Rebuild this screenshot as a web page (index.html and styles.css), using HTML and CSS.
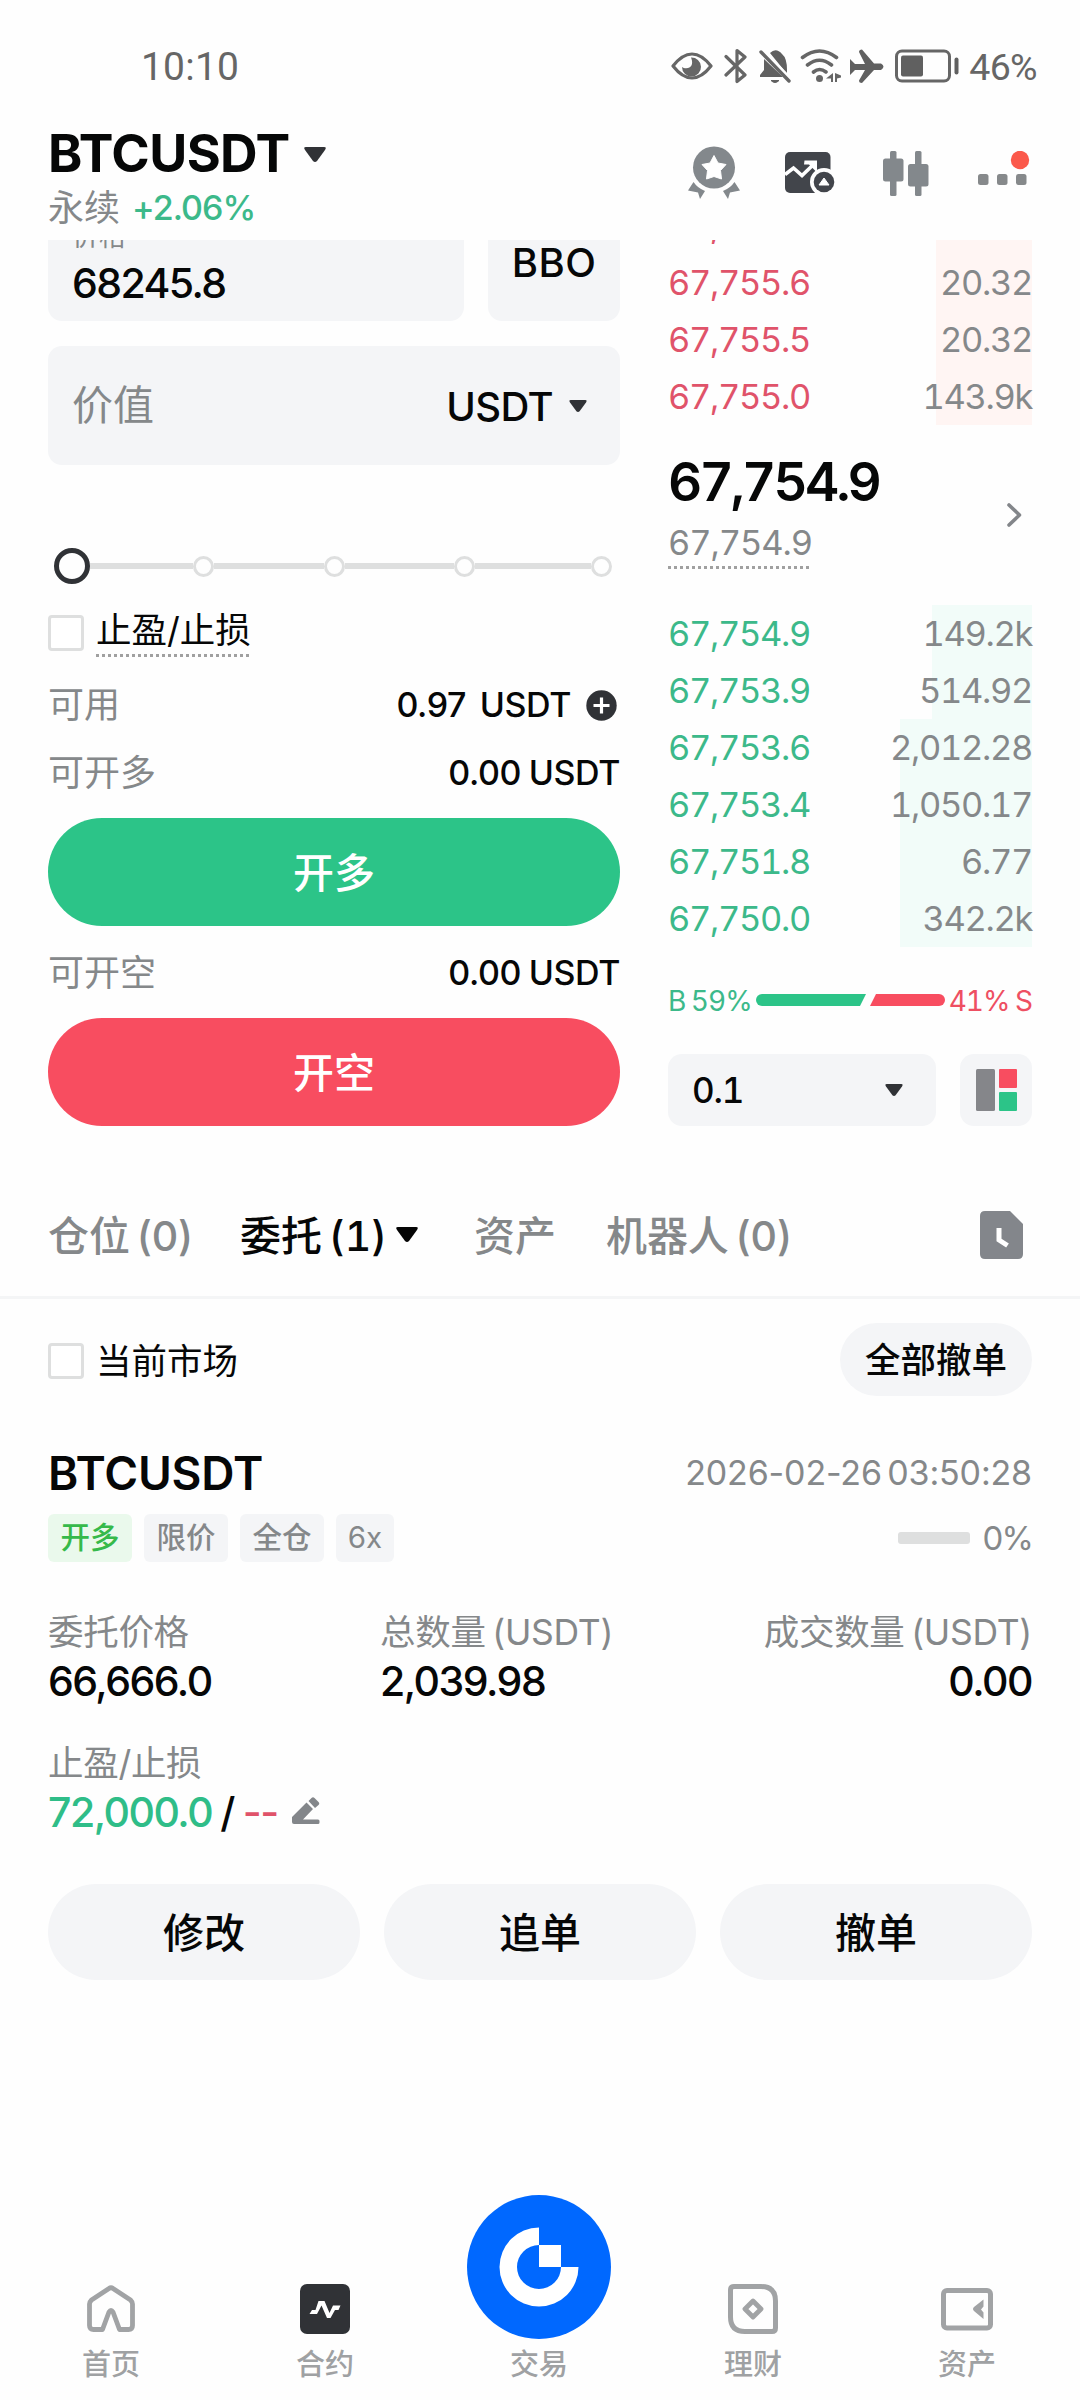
FILE: index.html
```html
<!DOCTYPE html>
<html lang="zh-CN">
<head>
<meta charset="utf-8">
<title>BTCUSDT 永续</title>
<link rel="stylesheet" href="styles.css">
</head>
<body>
<div class="screen">
  <div class="status">
    <span class="clock">10:10</span>
    <div class="status-icons">
      <svg class="i-eye" width="42" height="36" viewBox="0 0 42 36"><path d="M2 18C9 9 15 6 21 6s12 3 19 12c-7 9-13 12-19 12S9 27 2 18z" fill="none" stroke="#666" stroke-width="3.2" stroke-linejoin="round"/><path d="M20 9.500a9.500 9.500 0 1 1-9 9.500c2.500 2 9 2 10-3 .5-3-.5-5-1-6.500z" fill="#666"/></svg>
      <svg class="i-bt" width="24" height="36" viewBox="0 0 24 36"><path d="M2 8.500 21 27 13 33.500V2.500l8 6.500L2 27" fill="none" stroke="#666" stroke-width="3.200" stroke-linejoin="round" stroke-linecap="round"/></svg>
      <svg class="i-bell" width="32" height="36" viewBox="0 0 32 36"><path d="M11 5q6-6 12 1 5 4 5 16v4z" fill="#606060"/><path d="M5 11v11l-4 5v2h23z" fill="#606060"/><path d="M12 32.500h8q-4 4-8 0z" fill="#606060" stroke="#606060"/><path d="M4 2 31 30" stroke="#fefefe" stroke-width="3"/><path d="m2 4 28 29" stroke="#666" stroke-width="3.400" stroke-linecap="round"/></svg>
      <svg class="i-wifi" width="42" height="36" viewBox="0 0 42 36"><g fill="none" stroke="#666" stroke-width="3.600" stroke-linecap="round"><path d="M2.500 9.500q17-13 34 0M7.500 17q12-9.500 24 0M13.500 24q6-5 12.500 0"/></g><circle cx="19.500" cy="30.500" r="3.500" fill="#666"/><path d="M33 25v9h-2v-3.500h-5zM35 25v9h2v-3.500l4-1v-2z" fill="#666"/></svg>
      <svg class="i-plane" width="35" height="36" viewBox="0 0 35 36"><path d="M1 11l5 5h10L10 4q0-2.500 3-2.500l12 14h7q5 3.200 0 6.400h-7l-12 13q-3 0-3-2.500l6-10.500H6l-5 5z" fill="#606060"/></svg>
      <svg class="i-batt" width="64" height="36" viewBox="0 0 64 36"><rect x="1.500" y="3" width="53" height="30" rx="5.500" fill="none" stroke="#666" stroke-width="3"/><rect x="6" y="7.500" width="22" height="21" rx="2" fill="#606060"/><rect x="59.500" y="9.500" width="4" height="17" rx="2" fill="#606060"/></svg>
      <span class="percent">46%</span>
    </div>
  </div>

  <header class="header">
    <div class="pair">
      <div class="pair-top"><h1>BTCUSDT</h1><svg width="22" height="15" viewBox="0 0 22 15"><path d="M2 0h18q3 0 1 3l-8 11q-2 2-4 0L1 3q-2-3 1-3z" fill="#303236"/></svg></div>
      <div class="pair-sub"><span class="muted">永续</span><span class="change">+2.06%</span></div>
    </div>
    <div class="tools">
      <svg width="52" height="54" viewBox="0 0 52 54"><circle cx="26" cy="21.500" r="21" fill="#83888c"/><path d="m26 9.500 4 7.500 8 1.500-5.500 6 1 8.500-7.500-2.500-7.500 2.500 1-8.500-5.500-6 8-1.500z" fill="#fff" stroke="#fff" stroke-linejoin="round"/><path d="M5.500 36q4 6 11.500 9l-5 8-2-6.500-10-2zM46.500 36q-4 6-11.500 9l5 8 2-6.500 10-2z" fill="#83888c"/></svg>
      <svg class="chart" width="50" height="42" viewBox="0 0 50 42"><rect width="45.500" height="41" rx="5" fill="#42454b"/><path d="M0 22.500 8.500 16 17 23.500 29 12" fill="none" stroke="#fff" stroke-width="3.600"/><path d="M19.500 8.500h12.500v12l-4-4-4-4-5 0z" fill="#fff"/><circle cx="39" cy="30" r="14" fill="#fefefe"/><circle cx="39" cy="30" r="10.300" fill="#42454b"/><path d="m39 26 5 7h-10z" fill="#fff" stroke="#fff" stroke-linejoin="round"/></svg>
      <svg width="46" height="45" viewBox="0 0 46 45" fill="#83888c"><rect x="7" width="6.500" height="45" rx="1.500"/><rect y="7.500" width="20.500" height="23" rx="2.500"/><rect x="32" width="6.500" height="45" rx="1.500"/><rect x="25" y="13" width="20.500" height="22.500" rx="2.500"/></svg>
      <svg class="more" width="52" height="45" viewBox="0 0 52 45"><g fill="#86898b"><rect x="0" y="23" width="10.500" height="11" rx="2.500"/><rect x="19" y="23" width="10.500" height="11" rx="2.500"/><rect x="38" y="23" width="10.500" height="11" rx="2.500"/></g><circle cx="42" cy="9" r="9.200" fill="#fb594b"/></svg>
    </div>
  </header>

  <main class="trade">
    <section class="form">
      <div class="price-row">
        <div class="field price"><span class="label">价格</span><span class="value">68245.8</span></div>
        <div class="field bbo">BBO</div>
      </div>
      <div class="field amount"><span class="ph">价值</span><span class="unit">USDT</span><svg width="18" height="12" viewBox="0 0 22 15"><path d="M2 0h18q3 0 1 3l-8 11q-2 2-4 0L1 3q-2-3 1-3z" fill="#303236"/></svg></div>
      <div class="slider"><i class="thumb"></i><b class="first-seg"></b><i></i><b></b><i></i><b></b><i></i><b class="last-seg"></b><i></i></div>
      <div class="tpsl"><i class="check"></i><span class="dotted">止盈/止损</span></div>
      <div class="info first"><span>可用</span><strong class="wide">0.97 USDT</strong><svg width="31" height="31" viewBox="0 0 31 31"><circle cx="15.500" cy="15.500" r="15.200" fill="#303236"/><path d="M15.500 7.500v16M7.500 15.500h16" stroke="#fff" stroke-width="3.200"/></svg></div>
      <div class="info"><span>可开多</span><strong>0.00 USDT</strong></div>
      <button class="big long">开多</button>
      <div class="info"><span>可开空</span><strong>0.00 USDT</strong></div>
      <button class="big short">开空</button>
    </section>

    <section class="book">
      <div class="rows asks">
        <div style="--d:96px"><span>67,755.8</span><em></em></div>
        <div style="--d:96px"><span>67,755.6</span><em>20.32</em></div>
        <div style="--d:96px"><span>67,755.5</span><em>20.32</em></div>
        <div style="--d:96px"><span>67,755.0</span><em>143.9k</em></div>
      </div>
      <div class="last-block">
        <div><div class="last-price">67,754.9</div><div class="mark dotted">67,754.9</div></div>
        <svg width="16" height="24" viewBox="0 0 16 24"><path d="m2 2 10.500 10L2 22" fill="none" stroke="#83868a" stroke-width="3.600" stroke-linecap="round" stroke-linejoin="round"/></svg>
      </div>
      <div class="rows bids">
        <div style="--d:100px"><span>67,754.9</span><em>149.2k</em></div>
        <div style="--d:100px"><span>67,753.9</span><em>514.92</em></div>
        <div style="--d:132px"><span>67,753.6</span><em>2,012.28</em></div>
        <div style="--d:132px"><span>67,753.4</span><em>1,050.17</em></div>
        <div style="--d:132px"><span>67,751.8</span><em>6.77</em></div>
        <div style="--d:132px"><span>67,750.0</span><em>342.2k</em></div>
      </div>
      <div class="ratio"><span class="buy">B 59%</span><svg width="189" height="12" viewBox="0 0 189 12"><path d="M6 0h104l-6 12H6A6 6 0 0 1 6 0z" fill="#2cc488"/><path d="M120 0h63a6 6 0 0 1 0 12h-69z" fill="#f84d60"/></svg><span class="sell">41% S</span></div>
      <div class="book-tools">
        <div class="field step"><span>0.1</span><svg width="18" height="12" viewBox="0 0 22 15"><path d="M2 0h18q3 0 1 3l-8 11q-2 2-4 0L1 3q-2-3 1-3z" fill="#303236"/></svg></div>
        <div class="field layout"><svg width="41" height="42" viewBox="0 0 41 42"><rect width="19" height="42" rx="1.500" fill="#85868a"/><rect x="23" width="18" height="19" rx="1" fill="#f84d60"/><rect x="23" y="23" width="18" height="19" rx="1" fill="#2cc488"/></svg></div>
      </div>
    </section>
  </main>

  <nav class="tabs">
    <span class="t1">仓位 (0)</span>
    <span class="t2 on">委托 (1)<svg width="22" height="15" viewBox="0 0 22 15"><path d="M2 0h18q3 0 1 3l-8 11q-2 2-4 0L1 3q-2-3 1-3z" fill="#050505"/></svg></span>
    <span class="t3">资产</span>
    <span class="t4">机器人 (0)</span>
    <svg class="history" width="43" height="48" viewBox="0 0 43 48"><path d="M5 0h25l13 13v30q0 5-5 5H5q-5 0-5-5V5q0-5 5-5z" fill="#83868b"/><path d="M19 17v12l8.500 5.500" fill="none" stroke="#fff" stroke-width="5"/></svg>
  </nav>

  <section class="orders">
    <div class="filter"><i class="check"></i><span>当前市场</span><button class="cancel-all">全部撤单</button></div>
    <div class="order-head"><h2>BTCUSDT</h2><time>2026-02-26 03:50:28</time></div>
    <div class="tag-row"><span class="tag green">开多</span><span class="tag">限价</span><span class="tag">全仓</span><span class="tag lev">6x</span><i class="progress"></i><span class="pct">0%</span></div>
    <div class="stats">
      <div><label>委托价格</label><p>66,666.0</p></div>
      <div class="s2"><label>总数量 (USDT)</label><p>2,039.98</p></div>
      <div class="s3"><label>成交数量 (USDT)</label><p>0.00</p></div>
    </div>
    <div class="stops">
      <label>止盈/止损</label>
      <p><span class="tp">72,000.0</span><span class="slash">/</span><span class="sl">--</span><svg width="29" height="28" viewBox="0 0 29 28"><path d="M14.500 5.500 21 12 11 22.500H26q1.500 0 1.500 1.500v1.500q0 1.500-1.500 1.500H2q-2 0-2-2V20zM16.500 4 19.500 1q1.500-1.500 3 0l4 4q1.500 1.500 0 3L23 11z" fill="#83868a"/></svg></p>
    </div>
    <div class="actions"><button>修改</button><button>追单</button><button>撤单</button></div>
  </section>

  <footer class="nav">
    <div><svg width="48" height="50" viewBox="0 0 48 50"><path d="M15.500 45.500H6.500q-4 0-4-4V20q0-2 2-4L22 4.500q2-1.500 4 0L43.500 16q2 2 2 4v21.500q0 4-4 4h-9L26 28q-2-3-4 0z" fill="none" stroke="#a1a3a5" stroke-width="4.800" stroke-linejoin="round"/></svg><span>首页</span></div>
    <div><svg width="50" height="50" viewBox="0 0 50 50"><rect width="50" height="50" rx="7" fill="#303236"/><path d="M9.500 30 12 26h3.500L18.500 17h6l5 12 3.500-7.500h7.500l-2 4.500H35l-4.500 8h-3.500l-5.500-12.500L17 30z" fill="#fff"/></svg><span>合约</span></div>
    <div class="center"><svg width="144" height="144" viewBox="0 0 144 144"><circle cx="72" cy="72" r="72" fill="#0068ff"/><path d="M72 32.500A39.500 39.500 0 1 0 111.500 72H94V50H72zM72 50v22H94A22 22 0 1 1 72 50z" fill="#fff"/></svg><span>交易</span></div>
    <div><svg width="50" height="50" viewBox="0 0 50 50"><path d="M6 2.500h27q14.500 0 14.500 14.500v27q0 3.500-3.500 3.500H17Q2.500 47.500 2.500 33V6q0-3.500 3.500-3.500z" fill="none" stroke="#a1a3a5" stroke-width="5"/><path d="m25 17 8 8-8 8-8-8z" fill="none" stroke="#a1a3a5" stroke-width="4.800" stroke-linejoin="round"/></svg><span>理财</span></div>
    <div><svg width="52" height="50" viewBox="0 0 52 50"><rect x="2.500" y="6.500" width="47" height="37.500" rx="3.500" fill="none" stroke="#a1a3a5" stroke-width="5"/><path d="M42.500 15.500v7L40 25.500l2.500 3v6.500L33 27q-2-2 0-4z" fill="#a1a3a5"/></svg><span>资产</span></div>
  </footer>
</div>
</body>
</html>
```
FILE: styles.css
```css
* { box-sizing: border-box; }
body {
  margin: 0;
  background: #fefefe;
  color: #060707;
  font-family: Inter, "Noto Sans CJK SC", sans-serif;
}
h1, h2, p { margin: 0; }
i, em { font-style: normal; }
svg { display: block; flex: none; }
button {
  border: 0;
  padding: 0;
  font: inherit;
  color: inherit;
}
.screen {
  width: 1080px;
  height: 2400px;
  display: flex;
  flex-direction: column;
  overflow: hidden;
  white-space: nowrap;
}

/* status bar */
.status {
  height: 120px;
  padding: 12px 43px 0 141px;
  display: flex;
  align-items: center;
  justify-content: space-between;
  font-family: Roboto, sans-serif;
  color: #666;
}
.clock { font-size: 39px; padding-top: 2px; letter-spacing: .2px; }
.status-icons { display: flex; align-items: center; }
.i-bt { margin-left: 11px; }
.i-bell { margin-left: 11px; }
.i-wifi { margin-left: 9px; }
.i-plane { margin-left: 7px; }
.i-batt { margin-left: 11px; }
.percent { margin-left: 10px; font-size: 37.500px; letter-spacing: -.6px; padding-top: 2px; }

/* header */
.header {
  height: 120px;
  flex: none;
  padding: 0 48px;
  display: flex;
  justify-content: space-between;
}
.pair-top { display: flex; align-items: center; height: 68px; gap: 14px; }
h1 { font-size: 52px; line-height: 68px; font-weight: 700; letter-spacing: -.6px; }
.pair-sub {
  display: flex;
  gap: 12px;
  height: 40px;
  align-items: center;
  font-size: 36px;
  line-height: 40px;
}
.muted { color: #85888a; }
.change { font-size: 34px; font-weight: 500; color: #3cb98a; letter-spacing: -1px; }
.tools { display: flex; align-items: center; height: 106px; gap: 47px; }
.chart { margin: 0 1px 0 -2px; }
.more { margin: 0 2px; }

/* order form */
.trade {
  height: 886px;
  flex: none;
  overflow: hidden;
  padding: 0 48px;
  display: grid;
  grid-template-columns: 572px 364px;
  column-gap: 48px;
}
.form { margin-top: -38px; }
.field { background: #f4f5f7; border-radius: 14px; display: flex; align-items: center; }
.price-row { display: flex; gap: 24px; }
.price {
  width: 416px;
  height: 119px;
  padding: 16px 24px 0;
  flex-direction: column;
  align-items: flex-start;
}
.price .label { font-size: 27px; line-height: 38px; color: #85888a; }
.price .value { font-size: 41px; line-height: 54px; font-weight: 500; letter-spacing: -1.6px; }
.bbo { width: 132px; height: 119px; padding-top: 2px; justify-content: center; font-size: 40px; font-weight: 500; letter-spacing: .4px; }
.amount { margin-top: 25px; height: 119px; padding: 0 33px 0 24px; font-size: 41px; line-height: 60px; }
.ph { color: #85888a; margin: -1px auto 0 0; }
.unit { font-size: 40px; font-weight: 500; margin: 2px 16px 0 0; letter-spacing: -.6px; }
.slider { height: 36px; margin: 83px 8px 0 6px; display: flex; align-items: center; }
.slider i { width: 21px; height: 21px; flex: none; border: 3px solid #dedfdf; border-radius: 50%; }
.slider .thumb { width: 36px; height: 36px; border: 5px solid #303236; }
.slider b { flex: 110px 1 1; height: 6px; background: #dedfdf; }
.slider .first-seg { flex-basis: 103px; }
.slider .last-seg { flex-basis: 116px; }
.tpsl { display: flex; align-items: flex-start; height: 42px; margin-top: 31px; }
.check { width: 36px; height: 36px; flex: none; border: 3px solid #dedfdf; border-radius: 4px; background: #fff; }
.dotted {
  background: repeating-linear-gradient(90deg, #a0a0a0 0 3px, transparent 3px 6px) left bottom / 100% 3px no-repeat;
}
.tpsl .dotted { margin-left: 12px; height: 42px; line-height: 32px; font-size: 35.500px; }
.info { display: flex; align-items: center; height: 40px; margin-top: 27px; font-size: 36px; line-height: 40px; }
.info.first, .info.first + .info { margin-top: 28px; }
.info span { color: #85888a; margin-right: auto; }
.info strong { font-size: 34px; font-weight: 500; letter-spacing: -.4px; word-spacing: -1px; }
.info .wide { word-spacing: 5px; margin-right: 15px; }
.info svg { margin-right: 3px; }
.big {
  display: block;
  width: 572px;
  height: 108px;
  margin-top: 25px;
  padding-bottom: 4px;
  border-radius: 54px;
  font-size: 41px;
  font-weight: 500;
  color: #fff;
}
.long { background: #2cc488; }
.short { background: #f84d60; }

/* order book */
.book { margin-top: -43px; font-variant-numeric: tabular-nums; }
.rows div {
  height: 57px;
  display: flex;
  justify-content: space-between;
  align-items: center;
  font-size: 34.500px;
  letter-spacing: -1.35px;
  background: linear-gradient(var(--bg), var(--bg)) right / var(--d) 100% no-repeat;
}
.rows em { color: #85888a; }
.asks { --bg: #fff5f3; color: #e0536a; }
.bids { --bg: #f2fcf9; color: #3cb98a; }
.last-block { height: 180px; display: flex; align-items: center; justify-content: space-between; padding: 0 9px 0 0; }
.last-price { font-size: 53px; line-height: 64px; font-weight: 600; letter-spacing: -2.9px; margin-top: -12px; }
.mark { width: 142px; height: 47px; margin-top: 8px; font-size: 34.500px; line-height: 42px; color: #85888a; letter-spacing: -1.1px; }
.ratio { display: flex; align-items: center; justify-content: space-between; height: 40px; margin-top: 33px; font-size: 28px; letter-spacing: -1px; word-spacing: -1px; }
.ratio span { margin-top: 1px; }
.buy { color: #3cb98a; }
.sell { color: #ee4f62; }
.book-tools { display: flex; gap: 24px; margin-top: 34px; height: 72px; }
.step { width: 268px; padding: 0 33px 0 24px; justify-content: space-between; font-size: 35px; font-weight: 500; letter-spacing: -1.2px; }
.layout { width: 72px; justify-content: center; }

/* tabs */
.tabs {
  height: 173px;
  flex: none;
  padding: 47px 57px 0 48px;
  display: flex;
  align-items: center;
  border-bottom: 3px solid #f4f5f6;
  font-size: 41px;
  font-weight: 500;
  color: #85888a;
  letter-spacing: -.1px;
  word-spacing: -4px;
}
.tabs span { display: flex; align-items: center; margin-bottom: 3px; }
.t1 { width: 192px; }
.t2 { width: 234px; font-variant-numeric: tabular-nums; }
.t2 svg { margin: 3px 0 0 9px; }
.t3 { width: 132px; }
.on { color: #060707; }
.history { margin-left: auto; }

/* orders */
.orders { padding: 24px 48px 0; }
.filter { display: flex; align-items: center; height: 73px; font-size: 35.500px; }
.filter .check { margin-top: 2px; }
.filter span { margin: -2px 0 0 12px; }
.cancel-all { width: 192px; height: 73px; padding-bottom: 4px; margin-left: auto; border-radius: 37px; background: #f4f5f7; font-weight: 500; }
.order-head { display: flex; align-items: center; justify-content: space-between; height: 60px; margin-top: 47px; }
h2 { font-size: 46px; font-weight: 600; letter-spacing: -.2px; }
time { font-size: 34px; color: #85888a; word-spacing: -4px; letter-spacing: -.15px; margin-top: -1px; }
.tag-row { display: flex; align-items: center; gap: 12px; margin-top: 11px; height: 48px; }
.tag { width: 84px; height: 48px; border-radius: 6px; background: #f4f5f7; color: #85888a; font-size: 29.500px; line-height: 47px; text-align: center; font-weight: 500; }
.tag.lev { width: 58px; font-weight: 400; }
.green { background: #eaf9ec; color: #36b94a; }
.progress { width: 72px; height: 12px; border-radius: 3px; background: #dedfdf; margin-left: auto; }
.pct { font-size: 33px; color: #85888a; letter-spacing: -1.8px; }
.stats { display: grid; grid-template-columns: 332px 1fr auto; margin-top: 47px; }
label { display: block; font-size: 35.500px; line-height: 48px; color: #85888a; word-spacing: -3px; letter-spacing: -.3px; }
.stats p, .stops p { font-size: 41px; line-height: 48px; font-weight: 500; letter-spacing: -1.5px; }
.s3 { text-align: right; }
.stops { margin-top: 35px; }
.stops p { display: flex; align-items: center; }
.tp { color: #2fbd88; }
.slash { margin-left: 8px; }
.sl { color: #e0536a; margin-left: 9px; }
.stops svg { margin-left: 14px; margin-top: -2px; }
.actions { display: grid; grid-template-columns: repeat(3, 312px); gap: 24px; margin-top: 48px; }
.actions button { height: 96px; padding-bottom: 4px; border-radius: 48px; background: #f4f5f7; font-size: 41px; font-weight: 500; }

/* bottom navigation */
.nav { margin-top: auto; height: 206px; flex: none; padding: 0 6px 14px 4px; display: grid; grid-template-columns: repeat(5, 214px); align-items: end; }
.nav div { display: flex; flex-direction: column; align-items: center; }
.nav span { margin-top: 9px; font-size: 29px; line-height: 43px; color: #9fa1a3; font-weight: 500; }
.nav .center span { margin-top: 4px; }
```
